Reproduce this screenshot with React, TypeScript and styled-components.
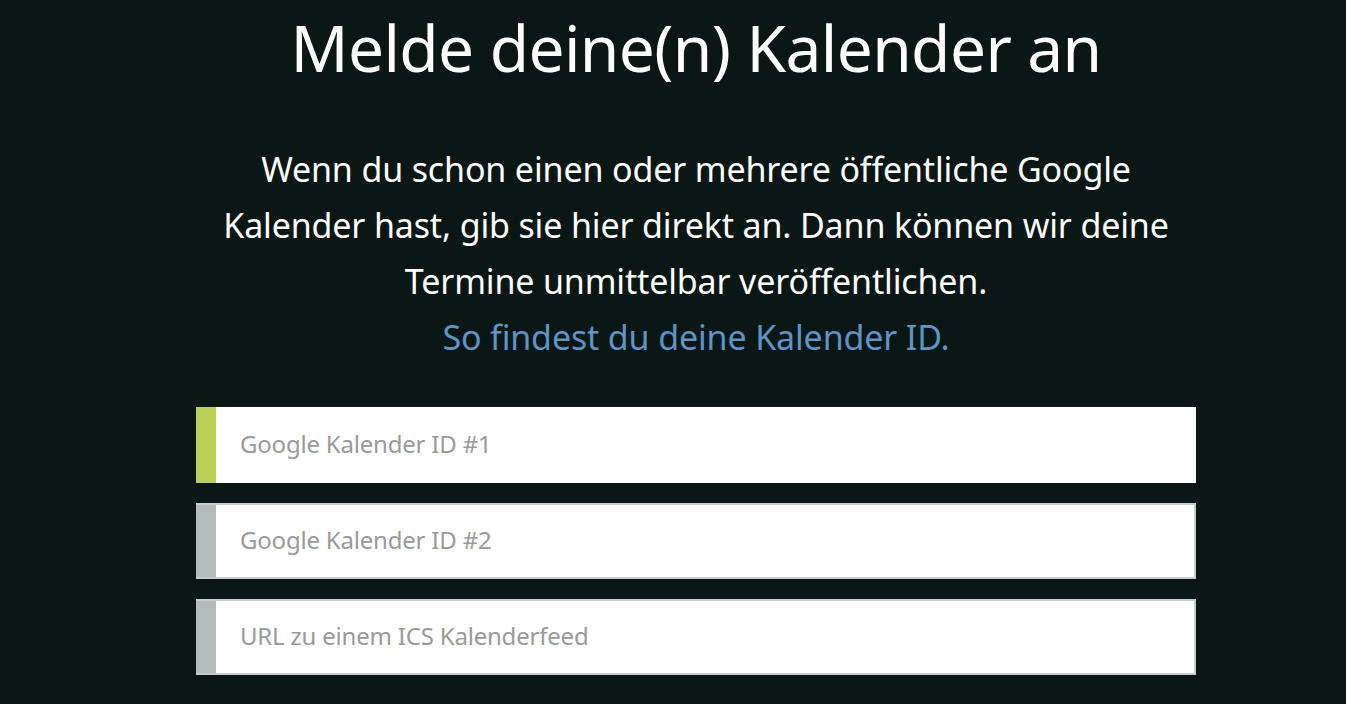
import React from 'react';
import styled, { createGlobalStyle } from 'styled-components';

const GlobalStyle = createGlobalStyle`
  html, body {
    margin: 0;
    padding: 0;
    background: #0a1715;
  }
  body {
    font-family: "Noto Sans", "Open Sans", sans-serif;
  }
`;

const Page = styled.div`
  min-height: 704px;
  background: #0a1715;
  padding-left: 46px;
  box-sizing: border-box;
  color: #ffffff;
`;

const Content = styled.div`
  width: 1000px;
  margin: 0 auto;
  text-align: center;
`;

const Title = styled.h1`
  margin: 0;
  padding-top: 12px;
  font-size: 64px;
  font-weight: 400;
  line-height: 72px;
  letter-spacing: -0.6px;
`;

const Intro = styled.p`
  margin: 57px 0 0;
  font-size: 34px;
  line-height: 56px;
  letter-spacing: -0.15px;
`;

const HelpLink = styled.a`
  color: #5e94c6;
  text-decoration: none;
`;

const Fields = styled.div`
  margin-top: 42px;
  display: flex;
  flex-direction: column;
  gap: 20px;
`;

const Field = styled.label<{ $active?: boolean }>`
  display: flex;
  height: 76px;
  box-sizing: border-box;
  background: #ffffff;
  border: ${(p) => (p.$active ? 'none' : '2px solid #c6cbcb')};
  border-left: none;
`;

const Marker = styled.span<{ $active?: boolean }>`
  width: 20px;
  flex: none;
  background: ${(p) => (p.$active ? '#bccf56' : '#b4bbbb')};
`;

const Input = styled.input`
  flex: 1;
  border: none;
  outline: none;
  background: transparent;
  padding: 0 0 4px 24px;
  font-family: "Noto Sans", "Open Sans", sans-serif;
  font-size: 24px;
  color: #333;
  letter-spacing: -0.2px;

  &::placeholder {
    color: #9a9a9a;
  }
`;

const fields = [
  { placeholder: 'Google Kalender ID #1', active: true },
  { placeholder: 'Google Kalender ID #2', active: false },
  { placeholder: 'URL zu einem ICS Kalenderfeed', active: false },
];

function App() {
  return (
    <Page>
      <GlobalStyle />
      <Content>
        <Title>Melde deine(n) Kalender an</Title>
        <Intro>
          Wenn du schon einen oder mehrere öffentliche Google
          <br />
          Kalender hast, gib sie hier direkt an. Dann können wir deine
          <br />
          Termine unmittelbar veröffentlichen.
          <br />
          <HelpLink href="#">So findest du deine Kalender ID.</HelpLink>
        </Intro>
        <Fields>
          {fields.map((f) => (
            <Field key={f.placeholder} $active={f.active}>
              <Marker $active={f.active} />
              <Input placeholder={f.placeholder} />
            </Field>
          ))}
        </Fields>
      </Content>
    </Page>
  );
}

export default App;
